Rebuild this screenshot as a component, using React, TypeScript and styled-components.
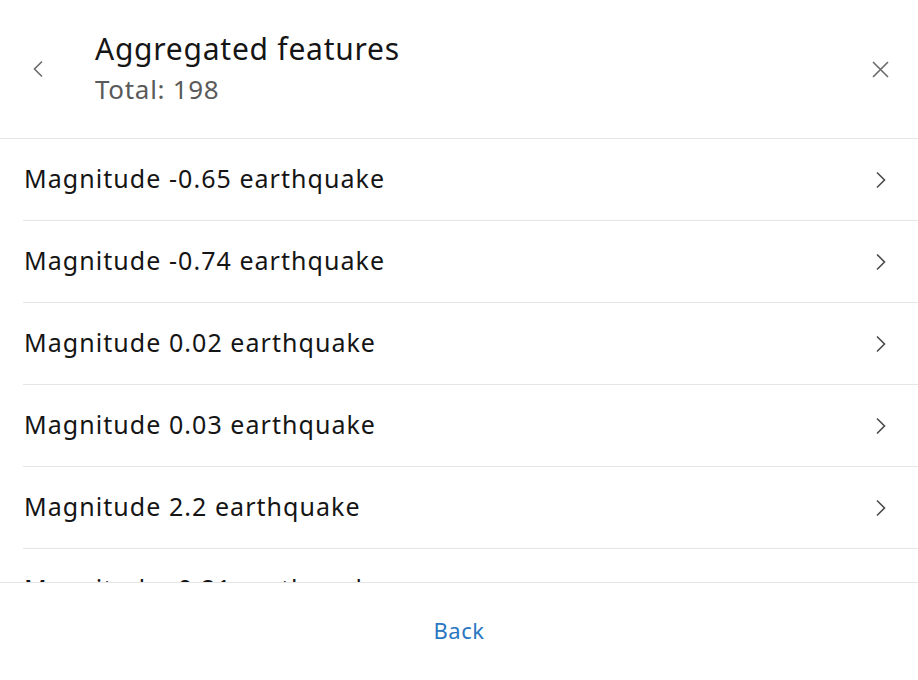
import React from 'react';
import styled, { createGlobalStyle } from 'styled-components';

const GlobalStyle = createGlobalStyle`
  html, body {
    margin: 0;
    padding: 0;
    background: #ffffff;
  }
  body {
    font-family: 'Noto Sans', 'Open Sans', sans-serif;
  }
`;

const Panel = styled.div`
  width: 918px;
  height: 680px;
  display: flex;
  flex-direction: column;
  background: #ffffff;
  overflow: hidden;
`;

const Header = styled.div`
  height: 138px;
  flex-shrink: 0;
  display: flex;
  align-items: center;
  border-bottom: 1px solid #e6e6e6;
`;

const IconButton = styled.button`
  width: 76px;
  height: 100%;
  border: none;
  background: none;
  padding: 0;
  display: flex;
  align-items: center;
  justify-content: center;
  color: #6b6b6b;
  cursor: pointer;
`;

const HeaderText = styled.div`
  flex: 1;
  display: flex;
  flex-direction: column;
  padding-left: 19px;
  padding-bottom: 3px;
`;

const Title = styled.div`
  font-size: 30px;
  letter-spacing: 0.75px;
  color: #151515;
  line-height: 40px;
`;

const Subtitle = styled.div`
  margin-top: 3px;
  font-size: 26px;
  letter-spacing: 0.7px;
  color: #5a5a5a;
  line-height: 34px;
`;

const List = styled.div`
  flex: 1;
  overflow: hidden;
  padding-left: 23px;
`;

const Row = styled.div`
  height: 82px;
  box-sizing: border-box;
  display: flex;
  align-items: center;
  justify-content: space-between;
  border-bottom: 1px solid #e6e6e6;
  font-size: 25px;
  letter-spacing: 1.05px;
  color: #151515;
  padding-left: 1px;
  padding-bottom: 4px;
`;

const RowChevron = styled.span`
  width: 76px;
  display: flex;
  justify-content: center;
  margin-right: -1px;
  padding-top: 4px;
  color: #4a4a4a;
`;

const Footer = styled.div`
  height: 97px;
  flex-shrink: 0;
  display: flex;
  align-items: center;
  justify-content: center;
  border-top: 1px solid #e6e6e6;
`;

const BackLink = styled.button`
  border: none;
  background: none;
  font-family: inherit;
  font-size: 22px;
  letter-spacing: 0.5px;
  color: #2a77c2;
  cursor: pointer;
  padding: 0 0 4px;
`;

const Chevron = ({ dir }: { dir: 'left' | 'right' }) => (
  <svg width="12" height="18" viewBox="0 0 12 18">
    <path
      d={dir === 'left' ? 'M10 1.5 L2.5 9 L10 16.5' : 'M2 1.5 L9.5 9 L2 16.5'}
      fill="none"
      stroke="currentColor"
      strokeWidth="1.6"
    />
  </svg>
);

const Close = () => (
  <svg width="17" height="17" viewBox="0 0 17 17">
    <path d="M1 1 L16 16 M16 1 L1 16" fill="none" stroke="currentColor" strokeWidth="1.6" />
  </svg>
);

const items = [
  'Magnitude -0.65 earthquake',
  'Magnitude -0.74 earthquake',
  'Magnitude 0.02 earthquake',
  'Magnitude 0.03 earthquake',
  'Magnitude 2.2 earthquake',
  'Magnitude -0.21 earthquake',
];

export default function App() {
  return (
    <>
      <GlobalStyle />
      <Panel>
        <Header>
          <IconButton>
            <Chevron dir="left" />
          </IconButton>
          <HeaderText>
            <Title>Aggregated features</Title>
            <Subtitle>Total: 198</Subtitle>
          </HeaderText>
          <IconButton>
            <Close />
          </IconButton>
        </Header>
        <List>
          {items.map((item) => (
            <Row key={item}>
              {item}
              <RowChevron>
                <Chevron dir="right" />
              </RowChevron>
            </Row>
          ))}
        </List>
        <Footer>
          <BackLink>Back</BackLink>
        </Footer>
      </Panel>
    </>
  );
}
